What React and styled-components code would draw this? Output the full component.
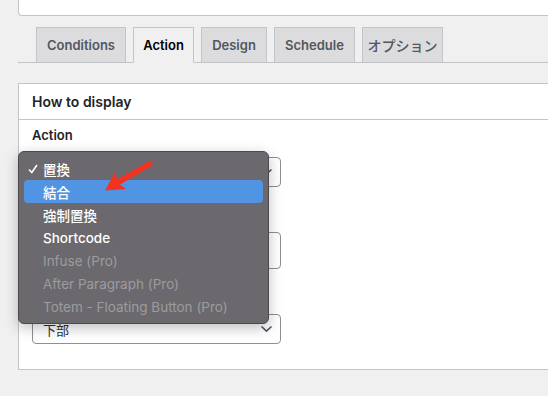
import styled, { createGlobalStyle } from 'styled-components';

const GlobalStyle = createGlobalStyle`
  html, body {
    margin: 0;
    background-color: #f0f0f1;
    font-family: Inter, "Noto Sans", "Noto Sans CJK JP", sans-serif;
    color: #1d2327;
  }
`;

const Page = styled.div`
  position: relative;
  width: 548px;
  height: 396px;
  overflow: hidden;
  padding-left: 18px;
  box-sizing: border-box;
`;

const TopBox = styled.div`
  height: 15px;
  background-color: white;
  border: 1px solid #c3c4c7;
  border-top: none;
  border-right: none;
  border-radius: 0 0 0 4px;
`;

const TabBar = styled.nav`
  display: flex;
  gap: 7px;
  margin-top: 11px;
  padding-left: 18px;
  border-bottom: 1px solid #c3c4c7;
`;

const Tab = styled.div`
  width: ${(p) => p.$w}px;
  height: 36px;
  display: flex;
  align-items: center;
  justify-content: center;
  box-sizing: border-box;
  margin-bottom: -1px;
  font-size: ${(p) => (p.$jp ? 14 : 13)}px;
  font-weight: ${(p) => (p.$jp ? 500 : 600)};
  border: 1px solid #c3c4c7;
  border-bottom-color: ${(p) => (p.$active ? '#f0f0f1' : '#c3c4c7')};
  background-color: ${(p) => (p.$active ? '#f0f0f1' : '#dcdcde')};
  color: ${(p) => (p.$active ? '#000' : '#50575e')};
`;

const Panel = styled.section`
  margin-top: 20px;
  background-color: white;
  border: 1px solid #c3c4c7;
  border-right: none;
`;

const PanelHeader = styled.h2`
  margin: 0;
  height: 35px;
  display: flex;
  align-items: center;
  padding: 0 13px;
  font-size: 14px;
  font-weight: 600;
  border-bottom: 1px solid #c3c4c7;
`;

const PanelBody = styled.div`
  padding: 7px 13px 25px;
  display: flex;
  flex-direction: column;
`;

const FieldLabel = styled.div`
  font-size: 13px;
  font-weight: 600;
  line-height: 16px;
  margin-bottom: 14px;
`;

const Select = styled.div`
  width: 249px;
  height: ${(p) => p.$h || 30}px;
  box-sizing: border-box;
  border: 1px solid #8c8f94;
  border-radius: 4px;
  display: flex;
  align-items: center;
  justify-content: space-between;
  padding: 0 7px 0 10px;
  font-size: 13px;
  color: #2c3338;
  margin-bottom: ${(p) => p.$mb || 0}px;
`;

const Menu = styled.ul`
  position: absolute;
  left: 18px;
  top: 151px;
  width: 251px;
  box-sizing: border-box;
  margin: 0;
  padding: 5px 5px;
  list-style: none;
  background-color: #6b696d;
  border: 1px solid #4a494d;
  border-radius: 6px;
  box-shadow: 0 4px 14px rgba(0, 0, 0, 0.25);
`;

const MenuItem = styled.li`
  position: relative;
  height: 23px;
  display: flex;
  align-items: center;
  padding-left: 19px;
  border-radius: 4px;
  font-size: 13.5px;
  font-weight: ${(p) => (p.$disabled ? 400 : 500)};
  color: ${(p) => (p.$disabled ? '#9d9b9f' : '#ffffff')};
  background-color: ${(p) => (p.$selected ? '#5294e4' : 'transparent')};
`;

const Check = styled.svg`
  position: absolute;
  left: 4px;
  top: 7px;
`;

const Arrow = styled.svg`
  position: absolute;
  left: 95px;
  top: 155px;
`;

const Chevron = () => (
  <svg width="13" height="8" viewBox="0 0 13 8">
    <path d="M1.5 1.5 L6.5 6.2 L11.5 1.5" fill="none" stroke="#50575e" strokeWidth="1.6" />
  </svg>
);

const options = [
  { label: '置換', checked: true },
  { label: '結合', selected: true },
  { label: '強制置換' },
  { label: 'Shortcode' },
  { label: 'Infuse (Pro)', disabled: true },
  { label: 'After Paragraph (Pro)', disabled: true },
  { label: 'Totem - Floating Button (Pro)', disabled: true },
];

const tabs = [
  { label: 'Conditions', w: 90 },
  { label: 'Action', w: 61, active: true },
  { label: 'Design', w: 66 },
  { label: 'Schedule', w: 81 },
  { label: 'オプション', w: 81, jp: true },
];

const App = () => (
  <>
    <GlobalStyle />
    <Page>
      <TopBox />
      <TabBar>
        {tabs.map((t) => (
          <Tab key={t.label} $w={t.w} $active={t.active} $jp={t.jp}>
            {t.label}
          </Tab>
        ))}
      </TabBar>
      <Panel>
        <PanelHeader>How to display</PanelHeader>
        <PanelBody>
          <FieldLabel>Action</FieldLabel>
          <Select $mb={45}>
            <span />
            <Chevron />
          </Select>
          <Select $h={37} $mb={45} />
          <Select>
            下部
            <Chevron />
          </Select>
        </PanelBody>
      </Panel>
      <Menu>
        {options.map((o) => (
          <MenuItem key={o.label} $selected={o.selected} $disabled={o.disabled}>
            {o.checked && (
              <Check width="10" height="10" viewBox="0 0 10 10">
                <path d="M1 5.5 L3.8 8.5 L9 1" fill="none" stroke="#fff" strokeWidth="1.6" />
              </Check>
            )}
            {o.label}
          </MenuItem>
        ))}
      </Menu>
      <Arrow width="60" height="40" viewBox="95 155 60 40">
        <path
          d="M150.5 160.5 L153 165 L120 184.5 L126 189 L105 190.5 L115 172 L117 179.5 Z"
          fill="#f3321f"
        />
      </Arrow>
    </Page>
  </>
);

export default App;
